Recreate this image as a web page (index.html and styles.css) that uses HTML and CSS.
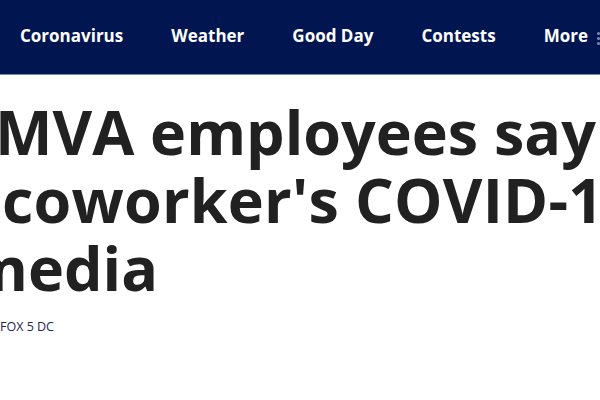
FILE: index.html
```html
<!DOCTYPE html>
<html>
<head>
<meta charset="utf-8">
<link rel="stylesheet" href="styles.css">
</head>
<body>
<header class="nav">
  <ul class="nav-list">
    <li class="nav-item">Coronavirus</li>
    <li class="nav-item">Weather</li>
    <li class="nav-item">Good Day</li>
    <li class="nav-item">Contests</li>
    <li class="nav-item">More</li>
  </ul>
  <span class="more-dots"><i></i><i></i><i></i></span>
</header>
<main class="article">
  <h1 class="headline">
    <span class="line line-1">MVA employees say</span>
    <span class="line line-2">coworker's COVID-19</span>
    <span class="line line-3">media</span>
  </h1>
  <div class="byline">FOX 5 DC</div>
</main>
</body>
</html>
```
FILE: styles.css
```css
html, body {
  margin: 0;
  padding: 0;
  background: #ffffff;
  overflow: hidden;
  width: 600px;
  height: 400px;
}
body {
  font-family: "Open Sans", "Liberation Sans", sans-serif;
}
.nav {
  position: relative;
  height: 74px;
  background: #011650;
  border-bottom: 1px solid #7f89ab;
  display: flex;
  align-items: center;
}
.nav-list {
  list-style: none;
  margin: 0;
  padding: 0 0 0 20px;
  display: flex;
  gap: 48px;
  white-space: nowrap;
}
.nav-item {
  color: #ffffff;
  font-size: 17px;
  font-weight: 700;
  line-height: 24px;
  margin-top: -3px;
}
.more-dots {
  position: absolute;
  left: 597px;
  top: 32px;
  display: flex;
  flex-direction: column;
  gap: 2px;
}
.more-dots i {
  display: block;
  width: 3px;
  height: 3px;
  background: #7f8bb0;
  border-radius: 50%;
}
.article {
  width: 597px;
  overflow: hidden;
}
.headline {
  margin: 23px 0 0 0;
  font-size: 61px;
  font-weight: 700;
  line-height: 68px;
  color: #212121;
  display: flex;
  flex-direction: column;
}
.line {
  display: block;
  white-space: nowrap;
}
.line-1 { margin-left: -5px; }
.line-2 { margin-left: 2px; letter-spacing: 0.2px; }
.line-3 { margin-left: -32px; }
.byline {
  margin: 16px 0 0 0;
  font-size: 12.5px;
  color: #1b2556;
}
```
